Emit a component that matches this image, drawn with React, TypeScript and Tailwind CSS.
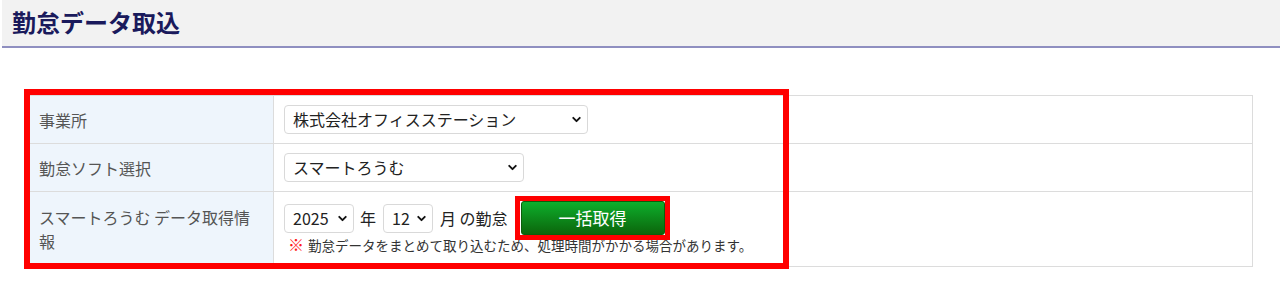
import { ChevronDown } from "lucide-react";

const font = { fontFamily: '"Noto Sans CJK JP", "Noto Sans", sans-serif' };

function Select({ value, width }: { value: string; width: string }) {
    return (
        <div className={`relative ${width}`}>
            <select
                defaultValue={value}
                className="w-full h-[29px] appearance-none rounded-[4px] border border-[#d9d9d9] bg-white pl-[8px] pr-[22px] text-[16px] leading-[27px] text-[#222]"
            >
                <option>{value}</option>
            </select>
            <ChevronDown
                strokeWidth={3.5}
                className="pointer-events-none absolute right-[5px] top-[8px] w-[13px] h-[13px] text-[#111]"
            />
        </div>
    );
}

export default function App() {
    return (
        <div className="bg-white w-[1280px] h-[284px]" style={font}>
            <div className="ml-[2px] h-[48px] bg-[#f2f2f2] border-b-2 border-[#8f8fc0] pl-[10px] flex items-center">
                <h1 className="text-[24px] font-bold text-[#1a1a5c] leading-none -mt-[2px]">勤怠データ取込</h1>
            </div>

            <div className="relative ml-[25px] mt-[47px] w-[1228px]">
                <table className="w-full border-collapse border border-[#dcdcdc] text-[16px]">
                    <tbody>
                        <tr className="h-[48px] border-b border-[#dcdcdc]">
                            <th className="w-[248px] bg-[#eef5fc] border-r border-[#dcdcdc] pl-[13px] text-left font-normal text-[#555]">
                                事業所
                            </th>
                            <td className="pl-[10px]">
                                <Select value="株式会社オフィスステーション" width="w-[304px]" />
                            </td>
                        </tr>
                        <tr className="h-[48px] border-b border-[#dcdcdc]">
                            <th className="bg-[#eef5fc] border-r border-[#dcdcdc] pl-[13px] text-left font-normal text-[#555]">
                                勤怠ソフト選択
                            </th>
                            <td className="pl-[10px]">
                                <Select value="スマートろうむ" width="w-[240px]" />
                            </td>
                        </tr>
                        <tr className="h-[74px]">
                            <th className="bg-[#eef5fc] border-r border-[#dcdcdc] pl-[13px] pr-[12px] text-left font-normal text-[#555] leading-[24px]">
                                スマートろうむ データ取得情報
                            </th>
                            <td className="pl-[10px] pt-[9px] pb-[12px]">
                                <div className="flex items-center h-[34px] text-[16px] text-[#222]">
                                    <Select value="2025" width="w-[70px]" />
                                    <span className="ml-[6px]">年</span>
                                    <div className="ml-[7px]">
                                        <Select value="12" width="w-[50px]" />
                                    </div>
                                    <span className="ml-[7px]">月 の勤怠</span>
                                    <div className="relative ml-[13px]">
                                        <button className="w-[144px] h-[34px] rounded-[3px] border border-[#0b5e0b] bg-gradient-to-b from-[#0cb02c] to-[#0b660b] text-white text-[17px]">
                                            一括取得
                                        </button>
                                        <div className="pointer-events-none absolute -left-[6px] -top-[5px] w-[155px] h-[44px] border-[5px] border-[#ff0000]" />
                                    </div>
                                </div>
                                <p className="text-[13.5px] leading-[18px] text-[#333]">
                                    <span className="text-[#ff1a1a] font-bold text-[16px] mr-[4px] ml-[4px]">※</span>
                                    勤怠データをまとめて取り込むため、処理時間がかかる場合があります。
                                </p>
                            </td>
                        </tr>
                    </tbody>
                </table>
                <div className="pointer-events-none absolute -left-[1px] -top-[6px] w-[765px] h-[180px] border-[6px] border-[#ff0000]" />
            </div>
        </div>
    );
}
